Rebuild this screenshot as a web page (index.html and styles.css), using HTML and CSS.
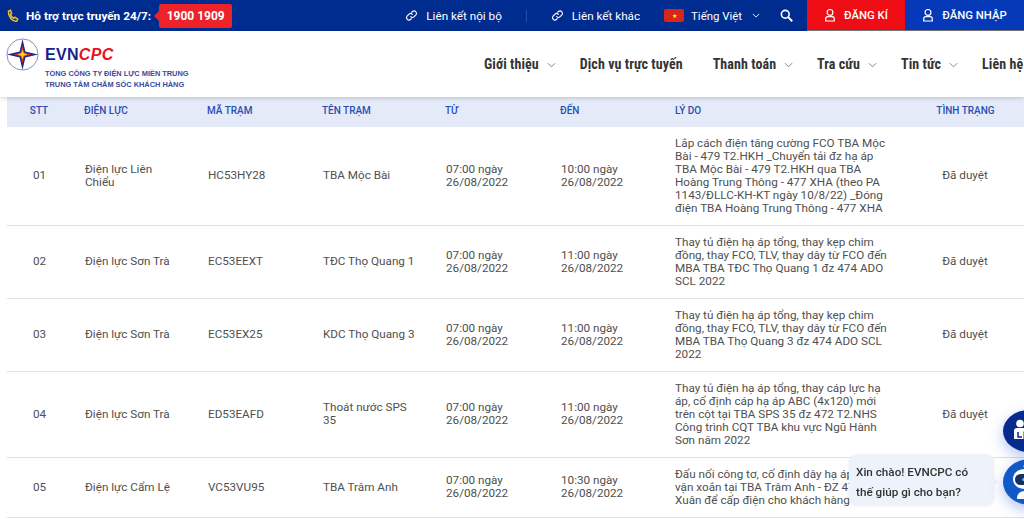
FILE: index.html
```html
<!DOCTYPE html>
<html lang="vi">
<head>
    <meta charset="UTF-8">
    <meta name="viewport" content="width=device-width, initial-scale=1.0">
    <title>Lịch cắt điện - EVNCPC</title>
    <link rel="stylesheet" href="styles.css">
</head>
<body>
    <div class="topbar">
        <div class="hotline">
            <svg class="phone" viewBox="0 0 16 16" width="13" height="14"><path d="M3 2 5.500 1 7 5 5.500 6.200C6 8 7.500 10 9.500 11L11 9.500 14.500 12 13 14.500C8 15 2.500 9 3 2Z" fill="none" stroke="#f2c230" stroke-width="1.800"/></svg>
            <b>Hỗ trợ trực truyến 24/7:</b>
            <span class="hotnum">1900 1909</span>
        </div>
        <div class="toplinks">
            <a class="toplink">
                <svg viewBox="0 0 16 16" width="13" height="13"><path d="M7 9.500a3 3 0 0 0 4.200 0l2.300-2.300a3 3 0 0 0-4.200-4.200L8.300 4M9 6.500a3 3 0 0 0-4.200 0L2.500 8.800A3 3 0 0 0 6.700 13L7.700 12" fill="none" stroke="#fff" stroke-width="1.400" stroke-linecap="round"/></svg>
                Liên kết nội bộ
            </a>
            <i class="sep"></i>
            <a class="toplink">
                <svg viewBox="0 0 16 16" width="13" height="13"><path d="M7 9.500a3 3 0 0 0 4.200 0l2.300-2.300a3 3 0 0 0-4.200-4.200L8.300 4M9 6.500a3 3 0 0 0-4.200 0L2.500 8.800A3 3 0 0 0 6.700 13L7.700 12" fill="none" stroke="#fff" stroke-width="1.400" stroke-linecap="round"/></svg>
                Liên kết khác
            </a>
            <a class="lang">
                <span class="flag">★</span>
                Tiếng Việt
                <svg viewBox="0 0 10 6" width="8" height="5" class="chev-w"><path d="M1 1 5 5 9 1" fill="none" stroke="#fff" stroke-width="1.100"/></svg>
            </a>
            <svg class="search" viewBox="0 0 16 16" width="13" height="13"><circle cx="6.500" cy="6.500" r="4.800" fill="none" stroke="#fff" stroke-width="2"/><path d="M10 10 15 15" stroke="#fff" stroke-width="2.400"/></svg>
            <a class="auth reg">
                <svg viewBox="0 0 14 16" width="12" height="14"><circle cx="7" cy="5" r="3.400" fill="none" stroke="#fff" stroke-width="1.400"/><path d="M2 15V12.500Q2 10 4.500 10H9.500Q12 10 12 12.500V15Z" fill="none" stroke="#fff" stroke-width="1.400"/></svg>
                ĐĂNG KÍ
            </a>
            <a class="auth login">
                <svg viewBox="0 0 14 16" width="12" height="14"><circle cx="7" cy="5" r="3.400" fill="none" stroke="#fff" stroke-width="1.400"/><path d="M2 15V12.500Q2 10 4.500 10H9.500Q12 10 12 12.500V15Z" fill="none" stroke="#fff" stroke-width="1.400"/></svg>
                ĐĂNG NHẬP
            </a>
        </div>
    </div>

    <header class="header">
        <div class="logo">
            <svg viewBox="0 0 34 34" width="33" height="33" class="logo-mark">
                <circle cx="17" cy="17" r="16" fill="#fff" stroke="#6a6db0" stroke-width="0.800"/>
                <path d="M17 1 20 14 33 17 20 20 17 33 14 20 1 17 14 14Z" fill="#1b2a8c"/>
                <path d="M17 8 19 15 26 17 19 19 17 26 15 19 8 17 15 15Z" fill="#e8232a"/>
                <path d="M17 12 18.200 15.800 22 17 18.200 18.200 17 22 15.800 18.200 12 17 15.800 15.800Z" fill="#f6e21c"/>
            </svg>
            <div class="logo-text">
                <div class="brand">EVN<em>CPC</em></div>
                <div class="brand-sub">TỔNG CÔNG TY ĐIỆN LỰC MIỀN TRUNG</div>
                <div class="brand-sub">TRUNG TÂM CHĂM SÓC KHÁCH HÀNG</div>
            </div>
        </div>
        <nav class="nav">
            <a class="nav-item"><span>Giới thiệu</span><svg viewBox="0 0 10 6" width="9" height="6"><path d="M1 1 5 5 9 1" fill="none" stroke="#777" stroke-width="1"/></svg></a>
            <a class="nav-item plain"><span>Dịch vụ trực tuyến</span></a>
            <a class="nav-item"><span>Thanh toán</span><svg viewBox="0 0 10 6" width="9" height="6"><path d="M1 1 5 5 9 1" fill="none" stroke="#777" stroke-width="1"/></svg></a>
            <a class="nav-item"><span>Tra cứu</span><svg viewBox="0 0 10 6" width="9" height="6"><path d="M1 1 5 5 9 1" fill="none" stroke="#777" stroke-width="1"/></svg></a>
            <a class="nav-item"><span>Tin tức</span><svg viewBox="0 0 10 6" width="9" height="6"><path d="M1 1 5 5 9 1" fill="none" stroke="#777" stroke-width="1"/></svg></a>
            <a class="nav-item"><span>Liên hệ</span></a>
        </nav>
    </header>

    <table class="outage">
        <colgroup>
            <col class="c-stt"><col class="c-dl"><col class="c-ma"><col class="c-ten"><col class="c-tu"><col class="c-den"><col class="c-ly"><col class="c-tt">
        </colgroup>
        <thead>
            <tr><th class="mid">STT</th><th>ĐIỆN LỰC</th><th>MÃ TRẠM</th><th>TÊN TRẠM</th><th>TỪ</th><th>ĐẾN</th><th>LÝ DO</th><th class="mid">TÌNH TRẠNG</th></tr>
        </thead>
        <tbody>
            <tr class="r1">
                <td class="mid">01</td><td>Điện lực Liên Chiểu</td><td>HC53HY28</td><td>TBA Mộc Bài</td>
                <td>07:00 ngày 26/08/2022</td><td>10:00 ngày 26/08/2022</td>
                <td class="why">Lắp cách điện tăng cường FCO TBA Mộc Bài - 479 T2.HKH _Chuyển tải đz hạ áp TBA Mộc Bài - 479 T2.HKH qua TBA Hoàng Trung Thông - 477 XHA (theo PA 1143/ĐLLC-KH-KT ngày 10/8/22) _Đóng điện TBA Hoàng Trung Thông - 477 XHA</td>
                <td class="mid">Đã duyệt</td>
            </tr>
            <tr class="r2">
                <td class="mid">02</td><td>Điện lực Sơn Trà</td><td>EC53EEXT</td><td>TĐC Thọ Quang 1</td>
                <td>07:00 ngày 26/08/2022</td><td>11:00 ngày 26/08/2022</td>
                <td class="why">Thay tủ điện hạ áp tổng, thay kẹp chim đồng, thay FCO, TLV, thay dây từ FCO đến MBA TBA TĐC Thọ Quang 1 đz 474 ADO SCL 2022</td>
                <td class="mid">Đã duyệt</td>
            </tr>
            <tr class="r2">
                <td class="mid">03</td><td>Điện lực Sơn Trà</td><td>EC53EX25</td><td>KDC Thọ Quang 3</td>
                <td>07:00 ngày 26/08/2022</td><td>11:00 ngày 26/08/2022</td>
                <td class="why">Thay tủ điện hạ áp tổng, thay kẹp chim đồng, thay FCO, TLV, thay dây từ FCO đến MBA TBA Thọ Quang 3 đz 474 ADO SCL 2022</td>
                <td class="mid">Đã duyệt</td>
            </tr>
            <tr class="r4">
                <td class="mid">04</td><td>Điện lực Sơn Trà</td><td>ED53EAFD</td><td>Thoát nước SPS 35</td>
                <td>07:00 ngày 26/08/2022</td><td>11:00 ngày 26/08/2022</td>
                <td class="why">Thay tủ điện hạ áp tổng, thay cáp lực hạ áp, cố định cáp hạ áp ABC (4x120) mới trên cột tại TBA SPS 35 đz 472 T2.NHS Công trình CQT TBA khu vực Ngũ Hành Sơn năm 2022</td>
                <td class="mid">Đã duyệt</td>
            </tr>
            <tr class="r5">
                <td class="mid">05</td><td>Điện lực Cẩm Lệ</td><td>VC53VU95</td><td>TBA Trâm Anh</td>
                <td>07:00 ngày 26/08/2022</td><td>10:30 ngày 26/08/2022</td>
                <td class="why">Đấu nối công tơ, cố định dây hạ áp<br>vặn xoắn tại TBA Trâm Anh - ĐZ 471 Hòa Xuân để cấp điện cho khách hàng</td>
                <td class="mid">Đã duyệt</td>
            </tr>
        </tbody>
    </table>

    <div class="float-btn support">
        <svg viewBox="0 0 24 28" width="24" height="28">
            <circle cx="7" cy="6.500" r="3.800" fill="#fff"/>
            <path d="M1 22V14Q1 11 4 11H10Q13 11 13 14V22Z" fill="#fff"/>
            <path d="M5 15V20H9" fill="none" stroke="#062a8e" stroke-width="1.500"/>
            <rect x="11" y="15" width="9" height="7" fill="#fff" stroke="#062a8e"/>
        </svg>
    </div>
    <div class="chat-bubble">
        Xin chào! EVNCPC có<br>thế giúp gì cho bạn?
    </div>
    <div class="float-btn bot">
        <svg viewBox="0 0 30 38" width="30" height="38">
            <circle cx="14" cy="3" r="1.500" fill="#fff"/>
            <path d="M14 6C7 6 2 10 2 16S7 26 14 26 26 22 26 16 21 6 14 6Z" fill="#fff"/>
            <rect x="4" y="11" width="20" height="11" rx="5.500" fill="#17305f"/>
            <rect x="11" y="15" width="8" height="3" rx="1.500" fill="#37c8f0"/>
            <path d="M6 36Q6 28 14 28T22 36Z" fill="#fff"/>
        </svg>
    </div>
</body>
</html>
```

FILE: styles.css
```css
html, body { margin: 0; padding: 0; height: 519px; overflow: hidden; }
body { font-family: Roboto, "Liberation Sans", sans-serif; color: #444; background: #fff; }
a { color: inherit; text-decoration: none; }

.topbar { height: 31px; background: #002c90; color: #fff; display: flex; justify-content: space-between; font-size: 12px; }
.hotline { display: flex; align-items: center; padding-left: 6px; }
.hotline b { font-size: 11.800px; font-weight: 700; margin-left: 7px; }
.phone { flex: none; }
.hotnum { position: relative; background: #ee2229; border-radius: 2px; height: 24px; line-height: 24px; width: 73px; text-align: center; margin-left: 8px; font-weight: 700; font-size: 12px; }
.hotnum::before { content: ""; position: absolute; left: -5px; top: 7px; border: 5px solid transparent; border-left: 0; border-right-color: #ee2229; }

.toplinks { display: flex; align-items: center; }
.toplink { display: flex; align-items: center; gap: 8px; font-size: 11.700px; }
.sep { width: 1px; height: 12px; background: #2a4da0; margin: 0 24px; }
.lang { display: flex; align-items: center; margin-left: 24px; font-size: 11.400px; }
.flag { width: 20px; height: 13px; background: #da251d; border-radius: 2px; color: #ff0; font-size: 6px; line-height: 13px; text-align: center; margin-right: 7px; }
.chev-w { margin-left: 10px; }
.search { margin: 0 0 0 20px; }
.auth { height: 31px; display: flex; align-items: center; justify-content: center; gap: 8px; font-weight: 500; font-size: 11.300px; box-sizing: border-box; border-bottom: 1px solid #777; }
.reg { width: 98px; margin-left: 14px; background: #ee0d15; }
.login { width: 119px; background: #0539b8; }

.header { height: 66px; display: flex; justify-content: space-between; box-shadow: 0 1px 4px rgba(0,0,0,0.18); position: relative; }
.logo { display: flex; padding: 7px 0 0 6px; }
.logo-mark { flex: none; }
.logo-text { margin-left: 6px; }
.brand { font-family: "Liberation Sans", sans-serif; font-weight: 700; font-size: 16px; line-height: 18px; color: #1b1f8e; letter-spacing: 0.300px; margin-top: 8px; }
.brand em { color: #e8141c; }
.brand-sub { font-family: "Liberation Sans", sans-serif; font-size: 7.400px; line-height: 11px; color: #3a4a9e; font-weight: 700; }
.brand + .brand-sub { margin-top: 4px; }

.nav { display: flex; align-items: center; gap: 24px; width: 540px; flex: none; white-space: nowrap; font-weight: 700; font-size: 14px; font-stretch: 85%; letter-spacing: 0.080px; color: #333; padding-bottom: 1px; }
.nav-item svg { margin-left: 8px; vertical-align: 1px; }
.plain { margin-right: 6px; }

.outage { margin-left: 7px; width: 1017px; table-layout: fixed; border-collapse: collapse; font-size: 11.700px; line-height: 13px; }
.c-stt { width: 64px; }
.c-dl { width: 123px; }
.c-ma { width: 115px; }
.c-ten { width: 123px; }
.c-tu { width: 115px; }
.c-den { width: 115px; }
.c-ly { width: 247px; }
.outage th { height: 30px; padding: 0 13px 3px; box-sizing: border-box; background: #e4eaf8; color: #2b4eb5; font-size: 10px; font-weight: 500; text-align: left; }
.outage th:last-child { padding-right: 15px; }
.outage td { padding: 0 13px 0 14px; vertical-align: middle; color: #4f4f4f; border-bottom: 1px solid #e0e0e0; }
.outage td:last-child { padding: 0 16px 0 13px; }
.outage td.why { padding: 0 18px 0 13px; }
.outage .mid { text-align: center; }
.r1 { height: 98px; }
.r2 { height: 73px; }
.r4 { height: 86px; }
.r5 { height: 60px; }

.float-btn { position: fixed; left: 1003px; border-radius: 50%; display: flex; align-items: center; box-shadow: 0 5px 14px rgba(40,90,220,0.35); }
.support { top: 410px; width: 42px; height: 42px; background: #062a8e; padding-left: 10px; }
.bot { top: 459px; width: 46px; height: 46px; background: #1259c8; padding-left: 8px; }
.chat-bubble { position: fixed; left: 849px; top: 454px; width: 145px; height: 51px; box-sizing: border-box; padding: 8px 0 0 7px; background: #eef2fb; border-radius: 8px; font-size: 11.700px; font-weight: 500; line-height: 20px; color: #333; box-shadow: 0 1px 3px rgba(0,0,0,0.08); }
.chat-bubble::after { content: ""; position: absolute; right: -4px; top: 24px; border: 4px solid transparent; border-right: 0; border-left-color: #eef2fb; }
```
